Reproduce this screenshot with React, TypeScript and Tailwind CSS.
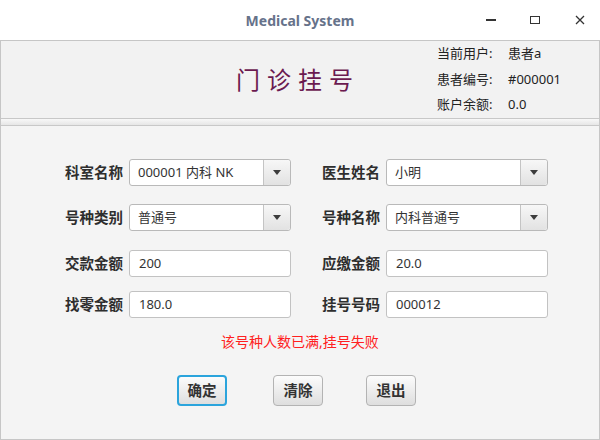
const cjk = { fontFamily: '"Noto Sans", "Noto Sans CJK SC", sans-serif' };

const ComboBox = ({ value }: { value: string }) => (
  <div className="flex h-[27px] w-[162px] rounded-[3px] border border-[#b9b9b9] bg-white">
    <div className="flex flex-1 items-center pl-[8px] text-[13px] text-[#333]">{value}</div>
    <div className="flex w-[27px] items-center justify-center rounded-r-[3px] border-l border-[#c4c4c4] bg-gradient-to-b from-[#f7f7f7] to-[#e2e2e2]">
      <div className="h-0 w-0 border-x-[4px] border-t-[5px] border-x-transparent border-t-[#3c3c3c]" />
    </div>
  </div>
);

const TextField = ({ value }: { value: string }) => (
  <div className="flex h-[27px] w-[162px] items-center rounded-[3px] border border-[#c2c2c2] bg-white pl-[9px] text-[13px] text-[#333]">
    {value}
  </div>
);

const FieldLabel = ({ text }: { text: string }) => (
  <div className="w-[60px] text-[14.5px] font-bold leading-[27px] text-[#2e2e2e]">{text}</div>
);

const Button = ({ text, focused }: { text: string; focused?: boolean }) => (
  <div
    className={`flex h-[31px] w-[50px] items-center justify-center rounded-[4px] bg-gradient-to-b from-[#fcfcfc] to-[#dedede] text-[14.5px] font-bold text-[#333] ${
      focused ? 'border-2 border-[#2ba4dc]' : 'border border-[#b3b3b3]'
    }`}
  >
    {text}
  </div>
);

export default function App() {
  const rows = [
    { top: 'mt-[33px]', left: ['科室名称', '000001 内科 NK', true], right: ['医生姓名', '小明', true] },
    { top: 'mt-[18px]', left: ['号种类别', '普通号', true], right: ['号种名称', '内科普通号', true] },
    { top: 'mt-[19px]', left: ['交款金额', '200', false], right: ['应缴金额', '20.0', false] },
    { top: 'mt-[14px]', left: ['找零金额', '180.0', false], right: ['挂号号码', '000012', false] },
  ] as const;

  return (
    <div className="flex h-[440px] w-[600px] flex-col bg-white" style={cjk}>
      {/* title bar */}
      <div className="relative flex h-[40px] items-center justify-center">
        <div className="text-[14px] font-bold text-[#66728a]">Medical System</div>
        <div className="absolute right-0 top-0 flex h-[40px] items-center">
          <div className="mr-[34px] h-[1.5px] w-[10px] bg-[#333]" />
          <div className="mr-[35px] h-[8px] w-[10px] border-[1.5px] border-[#333]" />
          <svg className="mr-[15px] h-[10px] w-[10px]" viewBox="0 0 10 10">
            <path d="M1 1 L9 9 M9 1 L1 9" stroke="#333" strokeWidth="1.3" />
          </svg>
        </div>
      </div>

      {/* window body */}
      <div className="flex flex-1 flex-col border border-[#c6c6c6] bg-[#f4f4f4]">
        <div className="flex h-[77px] bg-[#f2f2f2]">
          <div className="ml-[235px] flex items-center text-[24px] tracking-[7px] text-[#6b1a50]">门诊挂号</div>
          <div className="ml-[77px] grid grid-cols-[71px_auto] text-[13px] leading-[24.5px] text-[#222]">
            <div>当前用户:</div>
            <div>患者a</div>
            <div>患者编号:</div>
            <div>#000001</div>
            <div>账户余额:</div>
            <div>0.0</div>
          </div>
        </div>
        <div className="h-[8px] border-y border-[#c8c8c8] bg-gradient-to-b from-[#f8f8f8] to-[#e6e6e6]" />

        {rows.map((row) => (
          <div key={row.left[0]} className={`flex pl-[64px] ${row.top}`}>
            <FieldLabel text={row.left[0]} />
            <div className="ml-[4px]">
              {row.left[2] ? <ComboBox value={row.left[1]} /> : <TextField value={row.left[1]} />}
            </div>
            <div className="ml-[31px]">
              <FieldLabel text={row.right[0]} />
            </div>
            <div className="ml-[4px]">
              {row.right[2] ? <ComboBox value={row.right[1]} /> : <TextField value={row.right[1]} />}
            </div>
          </div>
        ))}

        <div className="mt-[14px] text-center text-[14px] leading-[20px] text-[#ff2020]">该号种人数已满,挂号失败</div>

        <div className="mt-[23px] flex pl-[176px]">
          <Button text="确定" focused />
          <div className="ml-[46px]">
            <Button text="清除" />
          </div>
          <div className="ml-[43px]">
            <Button text="退出" />
          </div>
        </div>
      </div>
    </div>
  );
}
